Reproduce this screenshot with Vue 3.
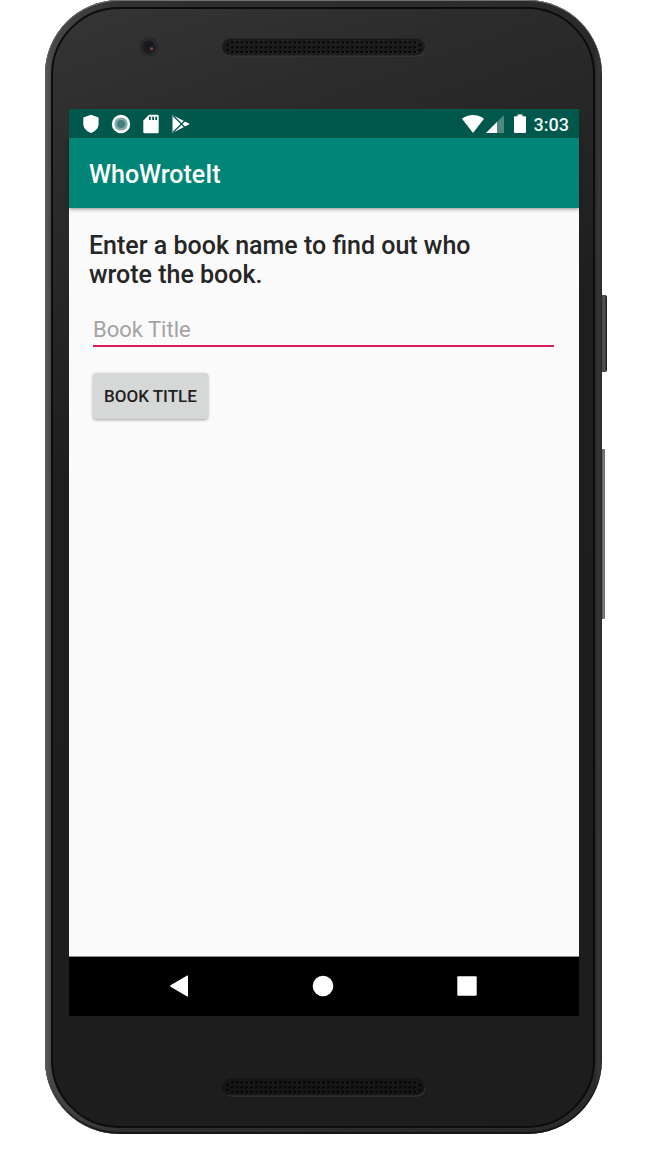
<script setup>
import { ref } from 'vue'

const title = ref('')
const rows = [4.5, 9.5, 14]
const holes = Array.from({ length: 39 }, (_, i) => 10.5 + i * 4.8)
const grilles = ['top', 'bottom']
</script>

<template>
  <div class="page">
    <div class="phone">
      <span class="side power"></span>
      <span class="side volume"></span>
      <div class="face">
        <div v-for="place in grilles" :key="place" class="bezel" :class="place">
          <svg v-if="place === 'top'" class="camera" viewBox="0 0 24 24" aria-hidden="true">
            <circle cx="12" cy="12" r="10.5" fill="#292929" stroke="#343434" />
            <circle cx="12" cy="12" r="6.5" fill="#1d1c20" />
            <circle cx="12.5" cy="11.5" r="4.5" fill="#19181f" />
            <circle cx="14.5" cy="13.5" r="2.2" fill="#3c2c36" />
            <circle cx="14.7" cy="13.8" r="1" fill="#80505e" />
          </svg>
          <svg class="grille" viewBox="0 0 204 19" aria-hidden="true">
            <rect x="1" y="1.5" width="202.5" height="17" rx="8.5" fill="#3d3d3d" />
            <rect x="0" y="0.5" width="203" height="17" rx="8.5" :fill="place === 'top' ? '#1b1b1b' : '#151515'" />
            <g v-for="y in rows" :key="y">
              <template v-for="x in holes" :key="x">
                <circle :cx="x + 0.5" :cy="y + 0.5" r="1.4" :fill="place === 'top' ? '#303030' : '#222222'" />
                <circle :cx="x" :cy="y" r="1.3" fill="#040404" />
              </template>
            </g>
            <circle cx="5.5" cy="7" r="1.2" fill="#040404" />
            <circle cx="5.5" cy="12" r="1.2" fill="#040404" />
            <circle cx="198" cy="7" r="1.2" fill="#040404" />
            <circle cx="198" cy="12" r="1.2" fill="#040404" />
          </svg>
        </div>

        <div class="screen">
          <div class="status">
            <div class="notices">
              <svg viewBox="0 0 20 20" aria-hidden="true">
                <path d="M10 .8 17.6 3.4V10c0 4-3.1 7.300-7.600 9C5.500 17.300 2.300 14 2.300 10V3.400Z" fill="#fff" />
              </svg>
              <svg viewBox="0 0 20 20" aria-hidden="true">
                <circle cx="10" cy="10" r="9.200" fill="#fff" />
                <circle cx="10" cy="10" r="6.600" fill="#80aba4" />
                <circle cx="10" cy="10" r="4" fill="#40817a" />
              </svg>
              <svg viewBox="0 0 20 20" aria-hidden="true">
                <path d="M8 .8h8.500q1.200 0 1.200 1.200v16q0 1.200-1.200 1.200h-13Q2.300 19.200 2.300 18V6.500Z" fill="#fff" />
                <path d="M8 2.700h1.800V6H8zM11.200 2.700H13V6h-1.800zM14.300 2.700h1.800V6h-1.800z" fill="#00574b" />
              </svg>
              <svg viewBox="0 0 20 20" aria-hidden="true">
                <path d="M1.500 1 18.800 10 1.500 19Z" fill="#fff" />
                <path d="M2 1.500 14.500 14M2 18.500 14.500 6" stroke="#00574b" stroke-width="1.300" fill="none" />
                <path d="M3.200 4.500v11L8.500 10Z" fill="#fff" />
              </svg>
            </div>
            <div class="system">
              <svg class="wifi" viewBox="0 0 22 20" aria-hidden="true">
                <path d="M0 4.700Q5 1 11 1t11 3.700L11 19Z" fill="#fff" />
              </svg>
              <svg class="signal" viewBox="0 0 18 20" aria-hidden="true">
                <path d="M18 1v18H0Z" fill="#4d8981" />
                <path d="M11 8v11H0Z" fill="#fff" />
              </svg>
              <svg class="battery" viewBox="0 0 12 20" aria-hidden="true">
                <path d="M3.500.5h5v1.800H11q1 0 1 1V18q0 1-1 1H1q-1 0-1-1V3.300q0-1 1-1h2.500Z" fill="#fff" />
              </svg>
              <span class="clock">3:03</span>
            </div>
          </div>

          <header class="appbar">
            <h1>WhoWroteIt</h1>
          </header>

          <main class="content">
            <label class="prompt" for="book">Enter a book name to find out who wrote the book.</label>
            <input id="book" v-model="title" class="field" type="text" placeholder="Book Title" />
            <button class="search" type="button">BOOK TITLE</button>
          </main>

          <nav class="navbar">
            <button type="button" aria-label="Back">
              <svg viewBox="0 0 22 22" aria-hidden="true">
                <path d="M20 1v20q0 .8-.8.400L2.500 11.700q-1-.7 0-1.400L19.200.6q.8-.4.800.4Z" fill="#fff" />
              </svg>
            </button>
            <button type="button" aria-label="Home">
              <svg viewBox="0 0 22 22" aria-hidden="true"><circle cx="11" cy="11" r="10.300" fill="#fff" /></svg>
            </button>
            <button type="button" aria-label="Overview">
              <svg viewBox="0 0 22 22" aria-hidden="true"><rect x="1.300" y="1.300" width="19.400" height="19.400" rx="1" fill="#fff" /></svg>
            </button>
          </nav>
        </div>
      </div>
    </div>
  </div>
</template>

<style>
body {
  margin: 0;
  background: #fff;
}
</style>

<style scoped>
.page {
  box-sizing: border-box;
  min-height: 100vh;
  padding: 0 43px 18px 45px;
  display: flex;
  font-family: Roboto, "Noto Sans", sans-serif;
}
.phone {
  position: relative;
  flex: 1;
  display: flex;
  padding: 7px 7px 6px 6px;
  border-radius: 74px;
  background: linear-gradient(to right, #5c5c5c, #484848 6px, #303030 80px, #2b2929 calc(100% - 7px), #383637 calc(100% - 3px), #2c2a2b);
  box-shadow: inset 0 1px 0 #707070, inset 1px 0 0 #555, inset 0 -2px 1px #161415;
}
.side {
  position: absolute;
  left: 100%;
}
.power {
  top: 295px;
  width: 5px;
  height: 77px;
  border-radius: 0 2px 2px 0;
  background: linear-gradient(to right, #454545, #555 3px, #202323 4px);
}
.volume {
  top: 449px;
  width: 3px;
  height: 170px;
  border-radius: 0 1px 1px 0;
  background: linear-gradient(to right, #555, #8a8a8a 2px, #555);
}
.face {
  flex: 1;
  min-width: 0;
  display: flex;
  flex-direction: column;
  padding: 0 14px 0 16px;
  border: 2px solid #0c0c0c;
  border-radius: 68px;
  background: linear-gradient(160deg, #353535, #2c2c2c 12%, #1e1e1e 36%, #1d1d1d);
}
.bezel {
  display: grid;
  grid-template-columns: 1fr 204px 1fr;
  align-items: center;
}
.top {
  order: 0;
  height: 72px;
  padding: 2px 0 26px;
}
.bottom {
  order: 2;
  height: 60px;
  padding: 41px 0 9px;
}
.camera {
  width: 24px;
  height: 24px;
  margin-left: 68px;
}
.grille {
  grid-column: 2;
  width: 204px;
  height: 19px;
}
.screen {
  order: 1;
  flex: 1;
  display: flex;
  flex-direction: column;
  background: #fafafa;
}
.status {
  position: relative;
  z-index: 1;
  height: 29px;
  padding: 0 10px 0 12px;
  display: flex;
  align-items: center;
  justify-content: space-between;
  background: #00574b;
}
.notices {
  display: flex;
  gap: 10px;
}
.notices svg {
  width: 20px;
  height: 20px;
}
.system {
  display: flex;
  align-items: center;
}
.system svg {
  height: 20px;
}
.wifi {
  width: 22px;
  margin-right: 2px;
}
.signal {
  width: 18px;
  margin-right: 10px;
}
.battery {
  width: 12px;
  margin-right: 8px;
}
.clock {
  padding-top: 2px;
  color: #f2f6f5;
  font-size: 18px;
  font-weight: 500;
  line-height: 20px;
}
.appbar {
  box-sizing: border-box;
  height: 70px;
  padding: 4px 20px 0;
  display: flex;
  align-items: center;
  background: #008577;
  box-shadow: 0 1px 4px rgba(0, 0, 0, 0.45);
}
h1 {
  margin: 0;
  color: #fff;
  font-size: 25px;
  font-weight: 500;
  line-height: 30px;
}
.content {
  flex: 1;
  padding: 23px 20px;
  display: flex;
  flex-direction: column;
  align-items: flex-start;
  border-bottom: 1px solid #8a8d8c;
}
.prompt {
  max-width: 430px;
  color: #262626;
  font-size: 25px;
  font-weight: 500;
  line-height: 29px;
}
.field {
  box-sizing: border-box;
  align-self: stretch;
  height: 38px;
  margin: 20px 5px 0 4px;
  padding: 4px 0 0;
  border: 0;
  border-bottom: 2px solid #d81b60;
  border-radius: 0;
  outline: 0;
  background: transparent;
  color: #262626;
  font: 400 22px/30px Roboto, "Noto Sans", sans-serif;
}
.field::placeholder {
  color: #a3a3a3;
  opacity: 1;
}
.search {
  height: 46px;
  margin: 26px 0 0 4px;
  padding: 0 11px;
  border: 0;
  border-radius: 3px;
  background: #d6d7d7;
  box-shadow: 0 1px 3px rgba(0, 0, 0, 0.35);
  color: #212121;
  font: 500 17px/20px Roboto, "Noto Sans", sans-serif;
}
.navbar {
  box-sizing: border-box;
  height: 59px;
  padding: 0 2px 2px 0;
  display: flex;
  align-items: center;
  justify-content: center;
  gap: 122px;
  background: #000;
}
.navbar button {
  padding: 0;
  border: 0;
  background: none;
}
.navbar svg {
  display: block;
  width: 22px;
  height: 22px;
}
</style>
